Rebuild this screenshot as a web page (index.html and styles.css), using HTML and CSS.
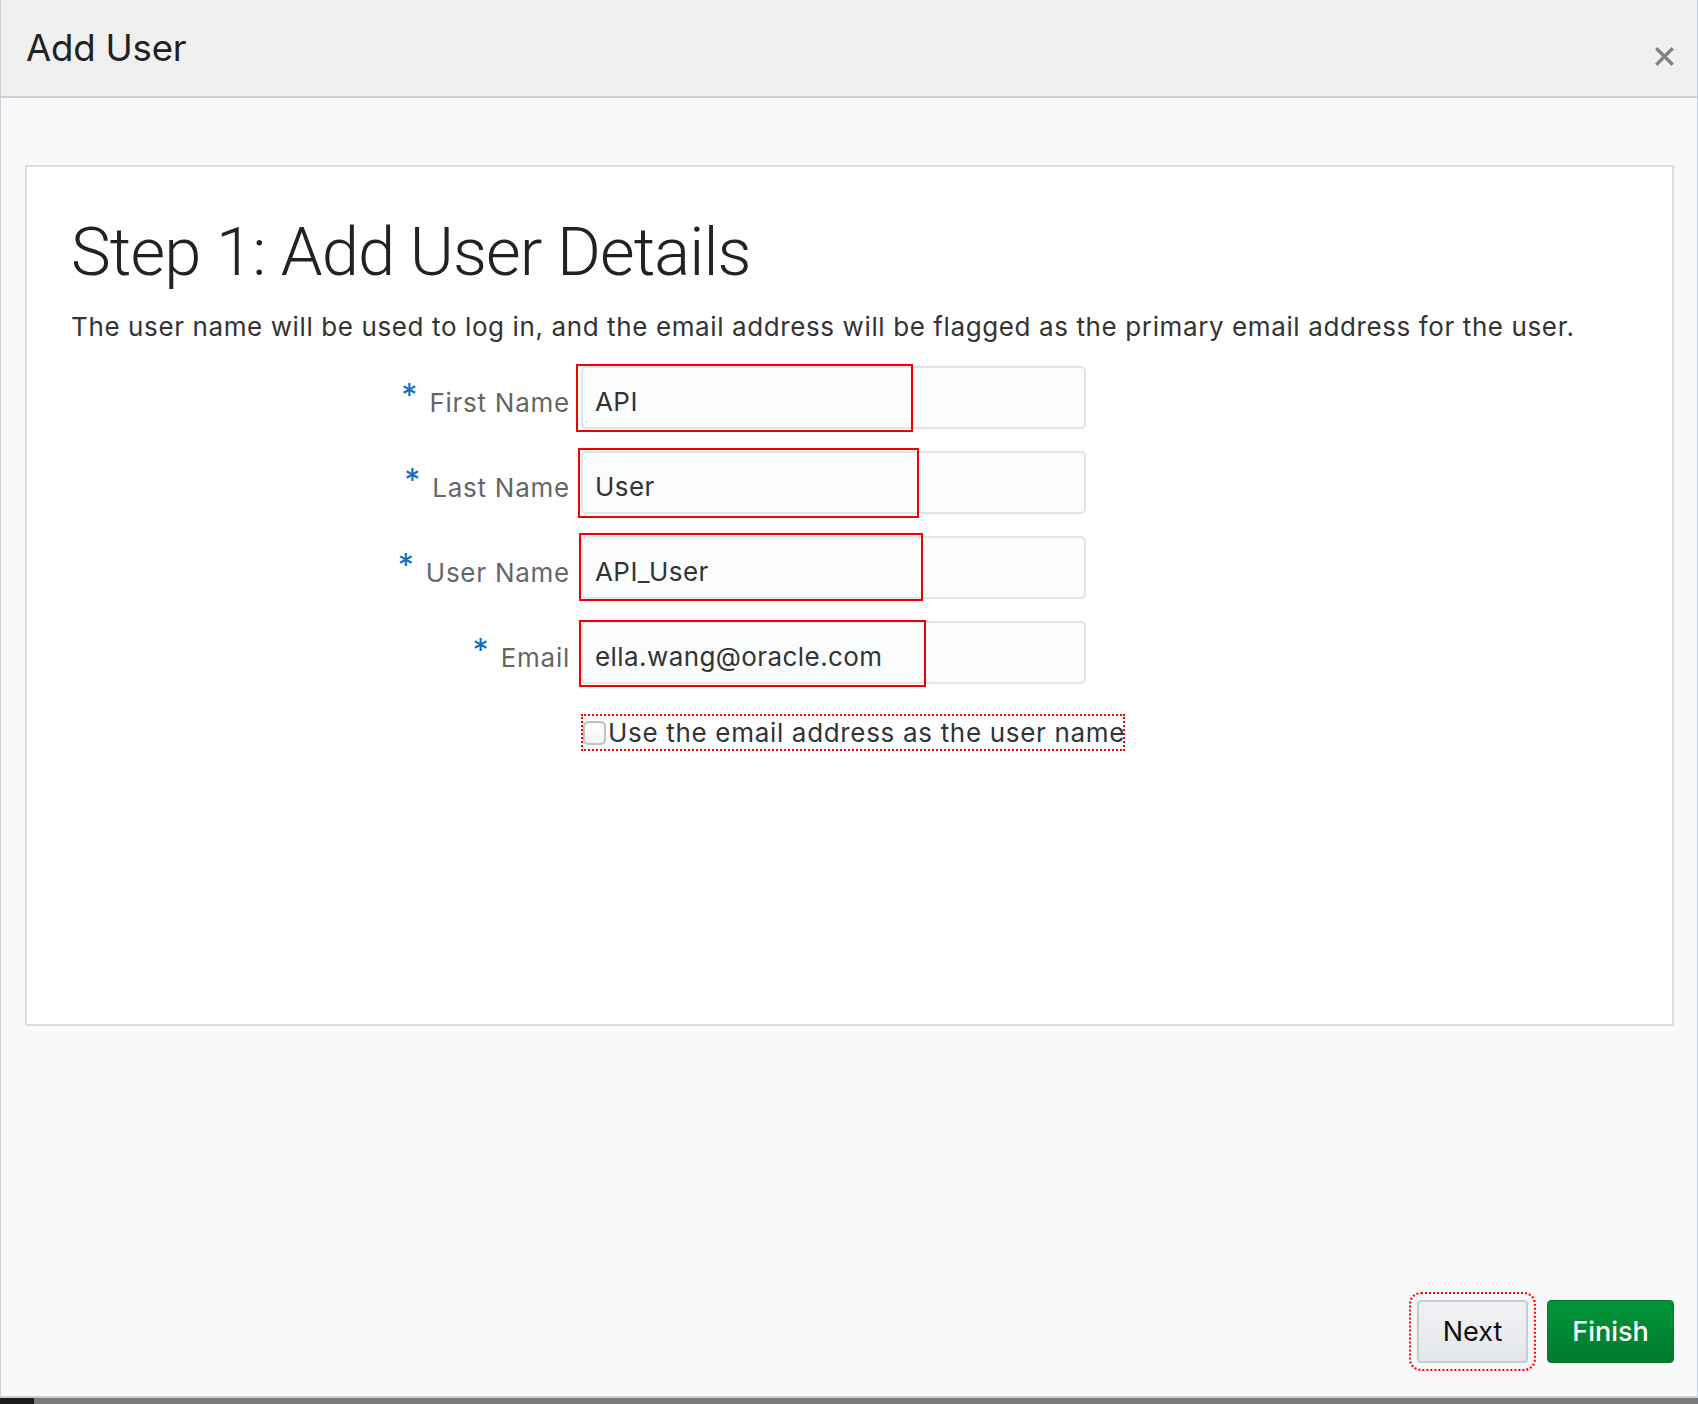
FILE: index.html
```html
<!DOCTYPE html>
<html lang="en">
<head>
<meta charset="utf-8">
<title>Add User</title>
<link rel="stylesheet" href="styles.css">
</head>
<body>
<div class="page">
  <div class="dialog">
    <header class="dialog-header">
      <h1 class="dialog-title">Add User</h1>
      <button class="close-btn" type="button" aria-label="Close">
        <svg width="19" height="19" viewBox="0 0 19 19"><path d="M2.5 2.5 L16.5 16.5 M16.5 2.5 L2.5 16.5" stroke="#838383" stroke-width="3.4" stroke-linecap="square"/></svg>
      </button>
    </header>
    <div class="dialog-body">
      <section class="panel">
        <h2 class="step-title">Step 1: Add User Details</h2>
        <p class="step-desc">The user name will be used to log in, and the email address will be flagged as the primary email address for the user.</p>
        <div class="form">
          <label class="label"><span class="req">*</span>First Name</label>
          <div class="field"><input class="input" type="text" value="API"><span class="mark mark-1"></span></div>

          <label class="label"><span class="req">*</span>Last Name</label>
          <div class="field"><input class="input" type="text" value="User"><span class="mark mark-2"></span></div>

          <label class="label"><span class="req">*</span>User Name</label>
          <div class="field"><input class="input" type="text" value="API_User"><span class="mark mark-3"></span></div>

          <label class="label"><span class="req">*</span>Email</label>
          <div class="field"><input class="input" type="text" value="ella.wang@oracle.com"><span class="mark mark-4"></span></div>

          <div class="check-cell">
            <label class="check-label"><span class="checkbox"></span>Use the email address as the user name</label>
          </div>
        </div>
      </section>
      <footer class="dialog-footer">
        <button class="btn btn-next" type="button">Next</button>
        <button class="btn btn-finish" type="button">Finish</button>
      </footer>
    </div>
  </div>
  <div class="bottom-strip"><span class="strip-dark"></span></div>
</div>
</body>
</html>
```
FILE: styles.css
```css
* { box-sizing: border-box; }
html, body { margin: 0; padding: 0; }
body {
  width: 1698px;
  height: 1404px;
  overflow: hidden;
  font-family: "Inter", "Liberation Sans", Arial, sans-serif;
  background: #f9f9f9;
  color: #333;
}
.page {
  display: flex;
  flex-direction: column;
  height: 1404px;
}
.dialog {
  flex: 1;
  display: flex;
  flex-direction: column;
  border-left: 1px solid #c6d0d9;
  border-right: 1px solid #c6d0d9;
  border-bottom: 2px solid #c6d0d9;
}
.dialog-header {
  height: 98px;
  background: #f0f0f0;
  border-bottom: 2px solid #c9d2da;
  display: flex;
  justify-content: space-between;
  align-items: flex-start;
  padding: 0 23px 0 25px;
}
.dialog-title {
  margin: 0;
  padding-top: 27px;
  font-size: 36.6px;
  line-height: 42px;
  font-weight: 400;
  color: #222;
  letter-spacing: -0.2px;
}
.close-btn {
  margin-top: 47px;
  padding: 0;
  border: 0;
  background: none;
  width: 19px;
  height: 19px;
  display: flex;
}
.dialog-body {
  flex: 1;
  display: flex;
  flex-direction: column;
  justify-content: space-between;
  padding: 67px 23px 33px 24px;
  background: #f9f9f9;
}
.panel {
  height: 861px;
  background: #fff;
  border: 2px solid #d6dee6;
  padding: 51px 20px 0 44px;
}
.step-title {
  margin: 0;
  font-family: "Roboto", "Inter", sans-serif;
  font-size: 67px;
  line-height: 68px;
  font-weight: 300;
  color: #222;
  letter-spacing: -0.9px;
}
.step-desc {
  margin: 28px 0 0;
  font-size: 26px;
  line-height: 26px;
  letter-spacing: 0.61px;
  color: #333;
}
.form {
  margin-top: 26px;
  display: grid;
  grid-template-columns: 499px 505px;
  column-gap: 11px;
  row-gap: 22px;
  grid-auto-rows: 63px;
}
.label {
  display: flex;
  justify-content: flex-end;
  align-items: flex-start;
  padding-top: 24px;
  font-size: 26px;
  line-height: 26px;
  letter-spacing: 0.75px;
  color: #666;
}
.req {
  color: #0c6dc2;
  font-size: 32px;
  line-height: 20px;
  margin-right: 12px;
  margin-top: -4px;
  letter-spacing: 0;
}
.field {
  position: relative;
}
.input {
  width: 505px;
  height: 63px;
  margin: 0;
  border: 2px solid #e0e5e9;
  border-radius: 5px;
  background: #fbfcfd;
  padding: 8px 12px 0;
  font-family: inherit;
  font-size: 26px;
  letter-spacing: 0.42px;
  color: #333;
  outline: none;
}
.mark {
  position: absolute;
  border: 2px solid #f20000;
  pointer-events: none;
}
.mark-1 { left: -5px; top: -2px; width: 337px; height: 68px; }
.mark-2 { left: -3px; top: -3px; width: 341px; height: 70px; }
.mark-3 { left: -2px; top: -3px; width: 344px; height: 68px; }
.mark-4 { left: -2px; top: -1px; width: 347px; height: 67px; }
.check-cell {
  grid-column: 2;
  padding-top: 8px;
}
.check-label {
  display: inline-flex;
  align-items: center;
  height: 37px;
  padding: 0 0 0 2px;
  outline: 2px dotted #f00;
  outline-offset: -2px;
  font-size: 26px;
  line-height: 26px;
  letter-spacing: 0.68px;
  color: #333;
  white-space: nowrap;
}
.checkbox {
  width: 23px;
  height: 24px;
  border: 2px solid #c2c2c2;
  border-radius: 5px;
  background: linear-gradient(#ffffff, #f4f4f4);
  box-shadow: inset 0 1px 1px rgba(0,0,0,0.06);
  margin-right: 2px;
  flex: none;
}
.dialog-footer {
  display: flex;
  justify-content: flex-end;
  gap: 19px;
  align-items: center;
}
.btn {
  font-family: inherit;
  font-size: 27px;
  height: 63px;
  border-radius: 4px;
  padding: 0;
  margin: 0;
}
.btn-next {
  width: 111px;
  color: #111;
  background: linear-gradient(#f1f2f4, #e4e7ea);
  border: 2px solid #c4ccd4;
  outline: 2px dotted #f00;
  outline-offset: 6px;
}
.btn-finish {
  width: 127px;
  color: #fff;
  font-weight: 500;
  background: linear-gradient(#009538, #007b2f);
  border: 1px solid #007a2e;
}
.bottom-strip {
  height: 6px;
  background: #7b7b7b;
  display: flex;
}
.strip-dark {
  width: 34px;
  background: #1b1b1b;
}
```
